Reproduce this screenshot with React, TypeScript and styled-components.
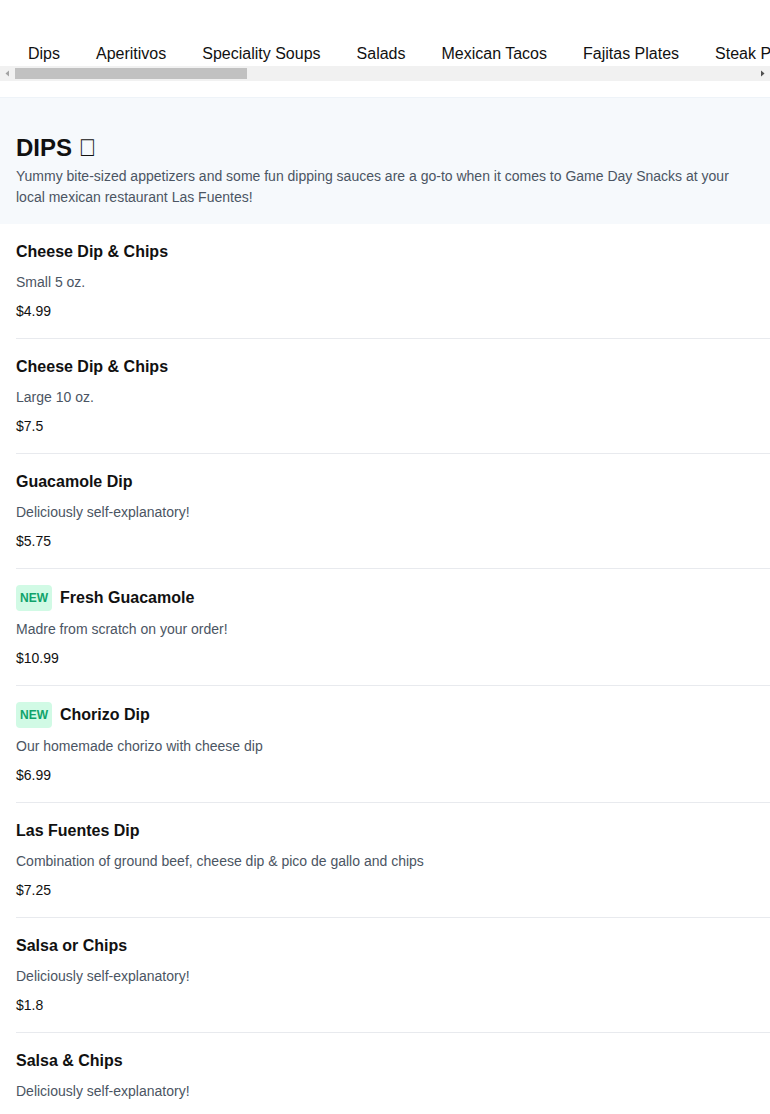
import React from "react";
import styled, { createGlobalStyle } from "styled-components";

const GlobalStyle = createGlobalStyle`
    html, body {
        margin: 0;
        padding: 0;
        background: #ffffff;
        font-family: "Liberation Sans", Arial, sans-serif;
        color: #111111;
    }
`;

const categories = [
    "Dips",
    "Aperitivos",
    "Speciality Soups",
    "Salads",
    "Mexican Tacos",
    "Fajitas Plates",
    "Steak Plates",
    "Chicken Plates",
    "Seafood Plates",
    "Burritos",
    "Enchiladas",
    "Quesadillas",
    "Chimichangas",
    "Vegetarian",
    "Combination Dinners",
    "Kids Menu",
    "Desserts",
    "Drinks",
    "Sides",
    "Lunch Specials",
    "Tortas"
];

interface MenuItem {
    name: string;
    description: string;
    price: string;
    isNew?: boolean;
}

const items: MenuItem[] = [
    { name: "Cheese Dip & Chips", description: "Small 5 oz.", price: "$4.99" },
    { name: "Cheese Dip & Chips", description: "Large 10 oz.", price: "$7.5" },
    { name: "Guacamole Dip", description: "Deliciously self-explanatory!", price: "$5.75" },
    { name: "Fresh Guacamole", description: "Madre from scratch on your order!", price: "$10.99", isNew: true },
    { name: "Chorizo Dip", description: "Our homemade chorizo with cheese dip", price: "$6.99", isNew: true },
    { name: "Las Fuentes Dip", description: "Combination of ground beef, cheese dip & pico de gallo and chips", price: "$7.25" },
    { name: "Salsa or Chips", description: "Deliciously self-explanatory!", price: "$1.8" },
    { name: "Salsa & Chips", description: "Deliciously self-explanatory!", price: "$3.5" }
];

// visible part of the category strip, as a share of its full width
const thumbShare = 0.3135;

const Page = styled.div`
    width: 100%;
`;

const CategoryNav = styled.nav`
    display: flex;
    overflow: hidden;
    padding: 41px 0 0 10px;
    white-space: nowrap;
`;

const CategoryLink = styled.a`
    flex: none;
    padding: 0 18px;
    font-size: 16px;
    line-height: 25px;
    color: #111111;
    text-decoration: none;
`;

const ScrollBar = styled.div`
    display: flex;
    height: 15px;
    background-color: #f1f1f1;
`;

const ScrollButton = styled.div`
    flex: none;
    width: 15px;
    height: 15px;
    display: flex;
    align-items: center;
    justify-content: center;
`;

const ScrollTrack = styled.div`
    flex: 1;
    display: flex;
    align-items: center;
`;

const ScrollThumb = styled.div`
    height: 11px;
    background-color: #c1c1c1;
`;

const SectionHeader = styled.header`
    margin-top: 16px;
    background-color: #f6f9fc;
    border-top: 1px solid #eef3f8;
    padding: 36px 16px 16px;
`;

const SectionTitle = styled.h2`
    margin: 0;
    font-size: 24px;
    line-height: 28px;
    font-weight: 700;
    color: #111111;
`;

const TitleGlyph = styled.span`
    font-weight: 400;
`;

const SectionDescription = styled.p`
    margin: 4px 0 0;
    font-size: 14px;
    line-height: 21px;
    color: #4b5563;
`;

const ItemList = styled.ul`
    list-style: none;
    margin: 0;
    padding: 0;
`;

const ItemRow = styled.li`
    margin-left: 16px;
    padding: 16px 0;
    border-bottom: 1px solid #e8eaee;
`;

const ItemHeading = styled.div`
    display: flex;
    align-items: center;
    gap: 8px;
`;

const NewBadge = styled.span`
    display: inline-flex;
    align-items: center;
    height: 26px;
    padding: 0 4px;
    border-radius: 4px;
    background-color: #d1fae5;
    color: #10a36b;
    font-size: 12px;
    font-weight: 700;
`;

const ItemName = styled.h3`
    margin: 0;
    font-size: 16px;
    line-height: 24px;
    font-weight: 700;
    color: #111111;
`;

const ItemDescription = styled.p`
    margin: 8px 0 0;
    font-size: 14px;
    line-height: 21px;
    color: #4b5563;
`;

const ItemPrice = styled.div`
    margin-top: 8px;
    font-size: 14px;
    line-height: 21px;
    color: #111111;
`;

const Arrow: React.FC<{ dir: "left" | "right"; color: string }> = ({ dir, color }) => (
    <svg width="7" height="7" viewBox="0 0 7 7">
        <path d={dir === "left" ? "M5 0.5 L1.5 3.5 L5 6.5 Z" : "M2 0.5 L5.5 3.5 L2 6.5 Z"} fill={color} />
    </svg>
);

const App: React.FC = () => {
    return (
        <Page>
            <GlobalStyle />
            <CategoryNav>
                {categories.map((c) => (
                    <CategoryLink key={c} href="#">
                        {c}
                    </CategoryLink>
                ))}
            </CategoryNav>
            <ScrollBar>
                <ScrollButton>
                    <Arrow dir="left" color="#a3a3a3" />
                </ScrollButton>
                <ScrollTrack>
                    <ScrollThumb style={{ width: `${thumbShare * 100}%` }} />
                </ScrollTrack>
                <ScrollButton>
                    <Arrow dir="right" color="#505050" />
                </ScrollButton>
            </ScrollBar>

            <SectionHeader>
                <SectionTitle>
                    DIPS <TitleGlyph>{"\uE000"}</TitleGlyph>
                </SectionTitle>
                <SectionDescription>
                    Yummy bite-sized appetizers and some fun dipping sauces are a go-to when it comes to Game Day
                    Snacks at your local mexican restaurant Las Fuentes!
                </SectionDescription>
            </SectionHeader>

            <ItemList>
                {items.map((item, i) => (
                    <ItemRow key={i}>
                        <ItemHeading>
                            {item.isNew && <NewBadge>NEW</NewBadge>}
                            <ItemName>{item.name}</ItemName>
                        </ItemHeading>
                        <ItemDescription>{item.description}</ItemDescription>
                        <ItemPrice>{item.price}</ItemPrice>
                    </ItemRow>
                ))}
            </ItemList>
        </Page>
    );
};

export default App;
